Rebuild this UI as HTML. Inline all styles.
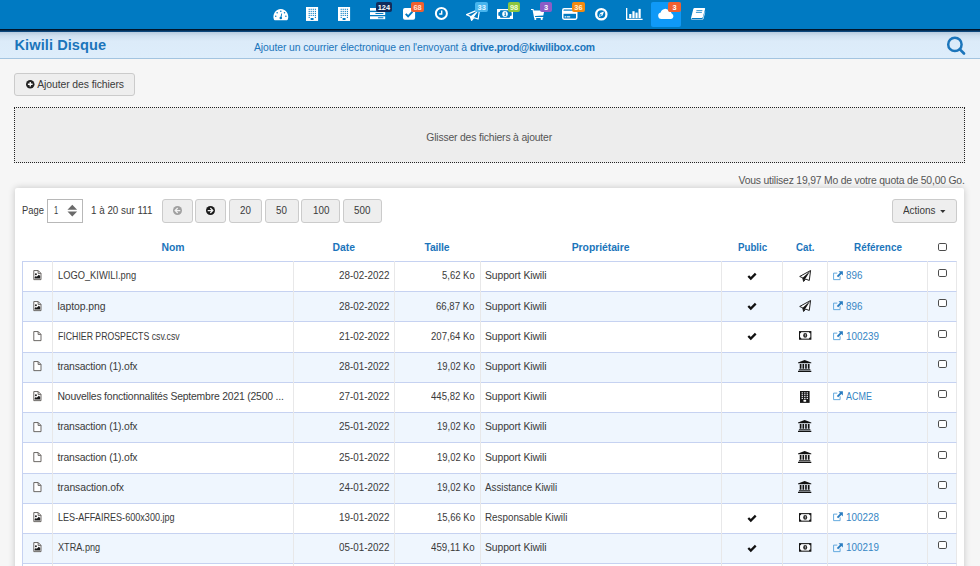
<!DOCTYPE html>
<html lang="fr"><head><meta charset="utf-8"><title>Kiwili Disque</title>
<style>
*{box-sizing:border-box;margin:0;padding:0}
html,body{width:980px;height:566px;overflow:hidden;background:#f6f6f6;font-family:"Liberation Sans",sans-serif;font-size:10.4px;color:#3a3a3a}
.abs{position:absolute}
#top{position:absolute;left:0;top:0;width:980px;height:29px;background:#007ac2}
#topline{position:absolute;left:0;top:28.7px;width:980px;height:3.3px;background:linear-gradient(#001225 0,#001a33 40%,#0b4376 60%,#0d4a80 100%)}
#hdr{position:absolute;left:0;top:32px;width:980px;height:27px;background:linear-gradient(#b7cbde 0,#cfe0f0 15%,#dcebf9 35%,#ddedfb 100%);border-bottom:1px solid #a3c4e0}
.t{position:absolute;white-space:nowrap;line-height:16px;color:#3a3a3a}
.btn{position:absolute;border:1px solid #cbcbcb;border-radius:3px;background:#eee}
#drop{position:absolute;left:14px;top:107px;width:951px;height:55.5px;background:#ededed;border:1px dotted #222}
#panel{position:absolute;left:15px;top:187.5px;width:949px;height:400px;border-radius:2px;background:#fff;box-shadow:0 0 7px rgba(0,0,0,.2)}
.row{position:absolute;left:22px;width:935px;border-top:1px solid #c6d2f1;border-left:1px solid #c6d2f1;border-right:1px solid #e8e8e9;background:#fff}
.row.alt{background:#eff6fe}
.vl{position:absolute;top:261px;width:1px;height:320px;background:#e8e8e9}
.ic{position:absolute;overflow:visible}
.cb{position:absolute;width:8.6px;height:8px;border:1px solid #4c4c4c;border-radius:1.8px;background:#fff}
.bdg{position:absolute;border-radius:2px;color:#fff;font-weight:bold;text-align:center}
</style></head><body>
<div id="top"></div>
<div class="abs" style="left:651px;top:2px;width:30px;height:25px;background:#0f99f7;border-radius:2px"></div>
<svg class="ic" style="left:273.05px;top:8.6px" width="15.65" height="11.3" viewBox="0 0 15.65 11.3"><path d="M7.82 0 A7.82 7.82 0 0 1 14.75 10.6 Q14.5 11.3 13.8 11.3 H1.85 Q1.15 11.3 0.9 10.6 A7.82 7.82 0 0 1 7.82 0 Z" fill="#fff"/><g fill="#007ac2"><circle cx="2.75" cy="7.2" r="0.75"/><circle cx="4.15" cy="3.8" r="0.75"/><circle cx="7.8" cy="2.2" r="0.75"/><circle cx="11.5" cy="3.8" r="0.75"/><circle cx="12.9" cy="7.2" r="0.75"/><circle cx="7.8" cy="9" r="1.3"/><path d="M7.4 8.6 L8.3 4.4 L9.1 4.6 L8.4 8.8 Z"/></g></svg>
<svg class="ic" style="left:306.1px;top:7.05px" width="12.1" height="13.95" viewBox="0 0 12.1 13.95"><rect width="12.1" height="13.95" fill="#fff"/><g fill="#007ac2"><rect x="2.65" y="1.75" width="1.1" height="1.1"/><rect x="4.65" y="1.75" width="1.1" height="1.1"/><rect x="6.75" y="1.75" width="1.1" height="1.1"/><rect x="8.85" y="1.75" width="1.1" height="1.1"/><rect x="2.65" y="3.85" width="1.1" height="1.1"/><rect x="4.65" y="3.85" width="1.1" height="1.1"/><rect x="6.75" y="3.85" width="1.1" height="1.1"/><rect x="8.85" y="3.85" width="1.1" height="1.1"/><rect x="2.65" y="5.85" width="1.1" height="1.1"/><rect x="4.65" y="5.85" width="1.1" height="1.1"/><rect x="6.75" y="5.85" width="1.1" height="1.1"/><rect x="8.85" y="5.85" width="1.1" height="1.1"/><rect x="2.65" y="7.85" width="1.1" height="1.1"/><rect x="4.65" y="7.85" width="1.1" height="1.1"/><rect x="6.75" y="7.85" width="1.1" height="1.1"/><rect x="8.85" y="7.85" width="1.1" height="1.1"/><rect x="2.65" y="9.85" width="1.1" height="1.1"/><rect x="8.85" y="9.85" width="1.1" height="1.1"/><rect x="4.5" y="10.9" width="3.2" height="2" rx="0.7"/></g></svg>
<svg class="ic" style="left:338.4px;top:7.05px" width="12.1" height="13.95" viewBox="0 0 12.1 13.95"><rect width="12.1" height="13.95" fill="#fff"/><g fill="#007ac2"><rect x="2.65" y="1.75" width="1.1" height="1.1"/><rect x="4.65" y="1.75" width="1.1" height="1.1"/><rect x="6.75" y="1.75" width="1.1" height="1.1"/><rect x="8.85" y="1.75" width="1.1" height="1.1"/><rect x="2.65" y="3.85" width="1.1" height="1.1"/><rect x="4.65" y="3.85" width="1.1" height="1.1"/><rect x="6.75" y="3.85" width="1.1" height="1.1"/><rect x="8.85" y="3.85" width="1.1" height="1.1"/><rect x="2.65" y="5.85" width="1.1" height="1.1"/><rect x="4.65" y="5.85" width="1.1" height="1.1"/><rect x="6.75" y="5.85" width="1.1" height="1.1"/><rect x="8.85" y="5.85" width="1.1" height="1.1"/><rect x="2.65" y="7.85" width="1.1" height="1.1"/><rect x="4.65" y="7.85" width="1.1" height="1.1"/><rect x="6.75" y="7.85" width="1.1" height="1.1"/><rect x="8.85" y="7.85" width="1.1" height="1.1"/><rect x="2.65" y="9.85" width="1.1" height="1.1"/><rect x="8.85" y="9.85" width="1.1" height="1.1"/><rect x="4.5" y="10.9" width="3.2" height="2" rx="0.7"/></g></svg>
<svg class="ic" style="left:369.6px;top:8.0px" width="15.2" height="11.2" viewBox="0 0 15.2 11.2"><rect x="0" y="0" width="15.2" height="2.7" fill="#fff"/><rect x="0" y="4.1" width="15.2" height="2.9" fill="#fff"/><rect x="0" y="8.3" width="15.2" height="2.9" fill="#fff"/><rect x="5.3" y="5" width="8.2" height="1.1" rx="0.55" fill="#007ac2"/><rect x="7.9" y="9.2" width="5.6" height="1.1" rx="0.55" fill="#007ac2"/></svg>
<div class="bdg" style="left:376.1px;top:2.1px;width:15.5px;height:9.5px;background:#102c5c;color:#fff;font-size:7.4px;line-height:12.1px">124</div>
<svg class="ic" style="left:403px;top:8.2px" width="12.1" height="11.7" viewBox="0 0 12.1 11.7"><rect width="12.1" height="11.7" rx="1.9" fill="#fff"/><path d="M2.7 5.9 L5.1 8.3 L9.5 3.7" fill="none" stroke="#007ac2" stroke-width="1.9"/></svg>
<div class="bdg" style="left:411.1px;top:2.1px;width:12.9px;height:9.5px;background:#f0602f;color:#ffe3d6;font-size:7.4px;line-height:12.1px">68</div>
<svg class="ic" style="left:435.1px;top:7.3px" width="12.8" height="12.8" viewBox="0 0 12.8 12.8"><circle cx="6.4" cy="6.4" r="5.5" fill="none" stroke="#fff" stroke-width="2"/><path d="M6.7 3.6 V7 H4.2" fill="none" stroke="#fff" stroke-width="1.4"/></svg>
<svg class="ic" style="left:466.1px;top:9.2px" width="14" height="11.8" viewBox="0 0 14 11.8"><path d="M13.6 0.2 L0.6 5.7 L4.3 7.4 L5.6 11.3 L7.8 8.7 L12.1 10 Z" fill="none" stroke="#fff" stroke-width="1.25" stroke-linejoin="round"/><path d="M4.3 7.4 L13.4 0.5 L5.6 11.3 Z" fill="#fff"/></svg>
<div class="bdg" style="left:475.3px;top:2.1px;width:12.8px;height:9.5px;background:#47b5ee;color:#e3f5ff;font-size:7.4px;line-height:12.1px">33</div>
<svg class="ic" style="left:497.1px;top:8.9px" width="16" height="10" viewBox="0 0 16 10"><rect width="16" height="10" fill="#fff"/><path d="M3.4 1.3 H12.6 A2.1 2.1 0 0 0 14.7 3.4 V6.6 A2.1 2.1 0 0 0 12.6 8.7 H3.4 A2.1 2.1 0 0 0 1.3 6.6 V3.4 A2.1 2.1 0 0 0 3.4 1.3 Z" fill="#007ac2"/><ellipse cx="8" cy="5" rx="2.8" ry="3" fill="#fff"/><path d="M7.5 3.9 L8.3 3.4 V6.5 M7.3 6.6 H9.2" stroke="#007ac2" stroke-width="0.9" fill="none"/></svg>
<div class="bdg" style="left:508px;top:2.1px;width:12px;height:9.5px;background:#8dc63f;color:#f0ffd9;font-size:7.4px;line-height:12.1px">98</div>
<svg class="ic" style="left:531px;top:8.9px" width="13.4" height="10.9" viewBox="0 0 13.4 10.9"><path d="M0 0 H2.5 L2.8 1.5 H13.4 L12.3 6.4 L4 7.1 L4.2 7.9 H12.2 V9 H3.1 L1.6 1.1 H0 Z" fill="#fff"/><circle cx="4.3" cy="9.9" r="1.05" fill="#fff"/><circle cx="10.7" cy="9.9" r="1.05" fill="#fff"/></svg>
<div class="bdg" style="left:540px;top:2.1px;width:12px;height:9.5px;background:#8d5cc6;color:#fff;font-size:7.4px;line-height:12.1px">3</div>
<svg class="ic" style="left:561.5px;top:7.9px" width="15.5" height="11.9" viewBox="0 0 15.5 11.9"><rect x="0.75" y="0.75" width="14" height="10.4" rx="1.4" fill="none" stroke="#fff" stroke-width="1.5"/><rect x="0.75" y="2.7" width="14" height="3.1" fill="#fff"/><rect x="2.6" y="8.3" width="1.8" height="1.1" fill="#fff"/><rect x="5" y="8.3" width="3.2" height="1.1" fill="#fff"/></svg>
<div class="bdg" style="left:571.9px;top:2.1px;width:13.1px;height:9.5px;background:#f28a10;color:#fff0d9;font-size:7.4px;line-height:12.1px">36</div>
<svg class="ic" style="left:595.4px;top:7.5px" width="12.6" height="12.6" viewBox="0 0 12.6 12.6"><circle cx="6.3" cy="6.3" r="5.15" fill="#007ac2" stroke="#fff" stroke-width="2.3"/><path d="M9 3.6 L7.5 7.5 L3.6 9 L5.1 5.1 Z" fill="#fff"/><path d="M5.7 5.7 L6.9 6.9 L4.4 8.2 Z" fill="#007ac2"/></svg>
<svg class="ic" style="left:625.6px;top:7.8px" width="16.6" height="11.9" viewBox="0 0 16.6 11.9"><path d="M0.65 0 V11.3 H16.6" fill="none" stroke="#fff" stroke-width="1.3"/><rect x="3.2" y="6" width="2.2" height="4.1" fill="#fff"/><rect x="6.4" y="3.2" width="2.2" height="6.9" fill="#fff"/><rect x="9.5" y="4.6" width="2.1" height="5.5" fill="#fff"/><rect x="12.5" y="0.9" width="2.2" height="9.2" fill="#fff"/></svg>
<svg class="ic" style="left:657.8px;top:8.0px" width="16" height="11.1" viewBox="0 0 16 11.1"><path d="M3.3 11.1 A3.3 3.3 0 0 1 2.7 4.6 A4.5 4.5 0 0 1 11.2 3.4 A2.7 2.7 0 0 1 13.7 5.6 A2.9 2.9 0 0 1 13.1 11.1 Z" fill="#fff"/></svg>
<div class="bdg" style="left:667.9px;top:2px;width:13.1px;height:9.6px;background:#f0602f;color:#fff;font-size:7.4px;line-height:12.2px">3</div>
<svg class="ic" style="left:691.1px;top:8.1px" width="14.2" height="11.6" viewBox="0 0 14.2 11.6"><path d="M3.6 0 H13.4 Q14.4 0 14.1 1 L11.9 9 Q11.6 10 10.6 10 H1.2 Q0.6 10 0.5 10.5 Q0.5 11 1.2 11 H10.8 Q11.6 11 12 10.2 L14 3.2 Q14.4 3.6 14.2 4.2 L12.6 10.4 Q12.2 11.6 11 11.6 H1 Q-0.3 11.6 0 10 L2.3 1 Q2.6 0 3.6 0 Z" fill="#fff"/><path d="M5.4 2.6 H11.4 M4.9 4.4 H10.9" stroke="#007ac2" stroke-width="0.8"/></svg>
<div id="topline"></div>
<div id="hdr"></div>
<div class="t" style="left:14.5px;top:37px;letter-spacing:0.067px;font-size:14.6px;font-weight:bold;color:#1b75bb">Kiwili Disque</div>
<div class="t" style="left:254px;top:40px;letter-spacing:-0.095px;color:#1b75bb">Ajouter un courrier électronique en l'envoyant à</div>
<div class="t" style="left:470px;top:40px;letter-spacing:-0.174px;font-weight:bold;color:#1b75bb">drive.prod@kiwilibox.com</div>
<svg class="ic" style="left:946px;top:36px" width="20" height="20" viewBox="0 0 20 20"><circle cx="8.9" cy="8.4" r="6.7" fill="none" stroke="#1b75bb" stroke-width="2.5"/><path d="M13.9 13.4 L18 17.5" stroke="#1b75bb" stroke-width="2.7" stroke-linecap="round"/></svg>
<div class="btn" style="left:14.25px;top:73.25px;width:120.75px;height:22.5px"></div>
<svg class="ic" style="left:25.75px;top:80.25px" width="8.5" height="8.5" viewBox="0 0 9 9"><circle cx="4.5" cy="4.5" r="4.5" fill="#222"/><path d="M4.5 2 V7 M2 4.5 H7" stroke="#fff" stroke-width="1.4"/></svg>
<div class="t" style="left:37.25px;top:77px;letter-spacing:-0.086px">Ajouter des fichiers</div>
<div id="drop"></div>
<div class="t" style="left:426.25px;top:130px;letter-spacing:-0.181px;color:#555">Glisser des fichiers à ajouter</div>
<div class="t" style="left:738.5px;top:173px;letter-spacing:-0.203px;color:#555">Vous utilisez 19,97 Mo de votre quota de 50,00 Go.</div>
<div id="panel"></div>
<div class="t" style="left:22.25px;top:203px;transform-origin:0 50%;transform:scaleX(0.9019)">Page</div>
<div class="abs" style="left:47.25px;top:199.25px;width:35.5px;height:23.25px;border:1px solid #b8b8b8;background:#fff"></div>
<div class="t" style="left:53.75px;top:203px;transform-origin:0 50%;transform:scaleX(0.7178)">1</div>
<svg class="ic" style="left:67.1px;top:203.75px" width="10.6" height="13.25" viewBox="0 0 11 13"><path d="M0.5 5.6 L5.5 0.3 L10.5 5.6 Z M0.5 7.4 L5.5 12.7 L10.5 7.4 Z" fill="#6a6a6a"/></svg>
<div class="t" style="left:91px;top:203px;transform-origin:0 50%;transform:scaleX(0.9462)">1 à 20 sur 111</div>
<div class="btn" style="left:162px;top:199.25px;width:30.6px;height:23.5px"></div>
<div class="btn" style="left:195px;top:199.25px;width:30.6px;height:23.5px"></div>
<div class="btn" style="left:229px;top:199.25px;width:32.6px;height:23.5px"></div>
<div class="btn" style="left:265px;top:199.25px;width:33.6px;height:23.5px"></div>
<div class="btn" style="left:301px;top:199.25px;width:38.6px;height:23.5px"></div>
<div class="btn" style="left:343px;top:199.25px;width:38.6px;height:23.5px"></div>
<div class="btn" style="left:892px;top:199.25px;width:65px;height:23.5px"></div>
<svg class="ic" style="left:172.95px;top:205.9px" width="9" height="9" viewBox="0 0 9 9"><circle cx="4.5" cy="4.5" r="4.5" fill="#a0a0a0"/><path d="M4.7 2 L2.2 4.5 L4.7 7 M2.4 4.5 H7.3" stroke="#f2f2f2" stroke-width="1.25" fill="none"/></svg>
<svg class="ic" style="left:206.25px;top:205.9px" width="9" height="9" viewBox="0 0 9 9"><circle cx="4.5" cy="4.5" r="4.5" fill="#1a1a1a"/><path d="M4.3 2 L6.8 4.5 L4.3 7 M6.6 4.5 H1.7" stroke="#f2f2f2" stroke-width="1.25" fill="none"/></svg>
<div class="t" style="left:240px;top:203px;transform-origin:0 50%;transform:scaleX(0.9427)">20</div>
<div class="t" style="left:276.25px;top:203px;transform-origin:0 50%;transform:scaleX(0.9427)">50</div>
<div class="t" style="left:312.5px;top:203px;transform-origin:0 50%;transform:scaleX(0.9456)">100</div>
<div class="t" style="left:354.25px;top:203px;transform-origin:0 50%;transform:scaleX(0.9456)">500</div>
<div class="t" style="left:903.4px;top:203px;transform-origin:0 50%;transform:scaleX(0.9537)">Actions</div>
<svg class="ic" style="left:939.6px;top:210px" width="5.6" height="3" viewBox="0 0 7 4"><path d="M0 0 H7 L3.5 4 Z" fill="#333"/></svg>
<div class="t" style="left:161.5px;top:240px;letter-spacing:-0.065px;font-weight:bold;color:#1b75bb">Nom</div>
<div class="t" style="left:332.5px;top:240px;letter-spacing:0.030px;font-weight:bold;color:#1b75bb">Date</div>
<div class="t" style="left:424.5px;top:240px;letter-spacing:-0.149px;font-weight:bold;color:#1b75bb">Taille</div>
<div class="t" style="left:571.75px;top:240px;letter-spacing:-0.057px;font-weight:bold;color:#1b75bb">Propriétaire</div>
<div class="t" style="left:737.5px;top:240px;transform-origin:0 50%;transform:scaleX(0.9347);font-weight:bold;color:#1b75bb">Public</div>
<div class="t" style="left:795.5px;top:240px;transform-origin:0 50%;transform:scaleX(0.9368);font-weight:bold;color:#1b75bb">Cat.</div>
<div class="t" style="left:853.75px;top:240px;transform-origin:0 50%;transform:scaleX(0.9532);font-weight:bold;color:#1b75bb">Référence</div>
<span class="cb" style="left:938.1px;top:242.9px"></span>
<div class="row" style="top:261px;height:31.22px"></div>
<div class="row alt" style="top:291.22px;height:31.22px"></div>
<div class="row" style="top:321.44px;height:31.22px"></div>
<div class="row alt" style="top:351.67px;height:31.22px"></div>
<div class="row" style="top:381.89px;height:31.22px"></div>
<div class="row alt" style="top:412.11px;height:31.22px"></div>
<div class="row" style="top:442.33px;height:31.22px"></div>
<div class="row alt" style="top:472.55px;height:31.22px"></div>
<div class="row" style="top:502.78px;height:31.22px"></div>
<div class="row alt" style="top:533px;height:31.22px"></div>
<div class="row" style="top:563.22px;height:31.22px"></div>
<div class="vl" style="left:52px"></div>
<div class="vl" style="left:293px"></div>
<div class="vl" style="left:394px"></div>
<div class="vl" style="left:480px"></div>
<div class="vl" style="left:721px"></div>
<div class="vl" style="left:782px"></div>
<div class="vl" style="left:827px"></div>
<div class="vl" style="left:927px"></div>
<svg class="ic" style="left:33.1px;top:270.4px" width="8.8" height="10.2" viewBox="0 0 9 11"><path d="M0.6 0.6 H5.4 L8.4 3.6 V10.4 H0.6 Z M5.3 0.8 V3.7 H8.2" fill="#fff" stroke="#514c48" stroke-width="0.9" stroke-linejoin="round"/><circle cx="2.9" cy="4.6" r="1.05" fill="#1a1a1a"/><path d="M1.5 9.2 V7.7 L2.8 6.4 L3.8 7.4 L6 5.1 L7.5 6.6 V9.2 Z" fill="#1a1a1a"/></svg>
<div class="t" style="left:57.5px;top:268px;transform-origin:0 50%;transform:scaleX(0.8960)">LOGO_KIWILI.png</div>
<div class="t" style="left:338.5px;top:268px;transform-origin:0 50%;transform:scaleX(0.9481)">28-02-2022</div>
<div class="t" style="left:441.75px;top:268px;transform-origin:0 50%;transform:scaleX(0.9113)">5,62 Ko</div>
<div class="t" style="left:485px;top:268px;letter-spacing:-0.111px">Support Kiwili</div>
<svg class="ic" style="left:747.4px;top:271.9px" width="10" height="8" viewBox="0 0 10 8"><path d="M1.3 4 L3.8 6.5 L8.7 1.6" fill="none" stroke="#111" stroke-width="2.3"/></svg>
<svg class="ic" style="left:799px;top:269.8px" width="12.2" height="12.4" viewBox="0 0 12.2 12.4"><path d="M11.6 0.5 L0.7 6.5 L3.7 7.8 L4.6 11.5 L6.7 9.1 L10.3 10.5 Z" fill="#fff" stroke="#151515" stroke-width="0.95" stroke-linejoin="round"/><path d="M3.7 7.8 L11.4 0.8 L4.6 11.5 Z" fill="#151515"/></svg>
<svg class="ic" style="left:832.9px;top:270.55px" width="10.2" height="9.2" viewBox="0 0 11 10"><path d="M7.7 5.8 V9.4 H0.6 V2.3 H4.6" fill="none" stroke="#58a3dc" stroke-width="1"/><path d="M6 0.3 H10.7 V5 L9.1 3.4 L5.6 6.9 L4.1 5.4 L7.6 1.9 Z" fill="#2a7cc0"/></svg>
<div class="t" style="left:846px;top:268px;transform-origin:0 50%;transform:scaleX(0.9456);color:#3585c4">896</div>
<span class="cb" style="left:938.1px;top:269.2px"></span>
<svg class="ic" style="left:33.1px;top:300.62px" width="8.8" height="10.2" viewBox="0 0 9 11"><path d="M0.6 0.6 H5.4 L8.4 3.6 V10.4 H0.6 Z M5.3 0.8 V3.7 H8.2" fill="#fff" stroke="#514c48" stroke-width="0.9" stroke-linejoin="round"/><circle cx="2.9" cy="4.6" r="1.05" fill="#1a1a1a"/><path d="M1.5 9.2 V7.7 L2.8 6.4 L3.8 7.4 L6 5.1 L7.5 6.6 V9.2 Z" fill="#1a1a1a"/></svg>
<div class="t" style="left:57.5px;top:299px;letter-spacing:-0.065px">laptop.png</div>
<div class="t" style="left:338.5px;top:299px;transform-origin:0 50%;transform:scaleX(0.9481)">28-02-2022</div>
<div class="t" style="left:436px;top:299px;transform-origin:0 50%;transform:scaleX(0.9229)">66,87 Ko</div>
<div class="t" style="left:485px;top:299px;letter-spacing:-0.111px">Support Kiwili</div>
<svg class="ic" style="left:747.4px;top:302.12px" width="10" height="8" viewBox="0 0 10 8"><path d="M1.3 4 L3.8 6.5 L8.7 1.6" fill="none" stroke="#111" stroke-width="2.3"/></svg>
<svg class="ic" style="left:799px;top:300.02px" width="12.2" height="12.4" viewBox="0 0 12.2 12.4"><path d="M11.6 0.5 L0.7 6.5 L3.7 7.8 L4.6 11.5 L6.7 9.1 L10.3 10.5 Z" fill="#fff" stroke="#151515" stroke-width="0.95" stroke-linejoin="round"/><path d="M3.7 7.8 L11.4 0.8 L4.6 11.5 Z" fill="#151515"/></svg>
<svg class="ic" style="left:832.9px;top:300.77px" width="10.2" height="9.2" viewBox="0 0 11 10"><path d="M7.7 5.8 V9.4 H0.6 V2.3 H4.6" fill="none" stroke="#58a3dc" stroke-width="1"/><path d="M6 0.3 H10.7 V5 L9.1 3.4 L5.6 6.9 L4.1 5.4 L7.6 1.9 Z" fill="#2a7cc0"/></svg>
<div class="t" style="left:846px;top:299px;transform-origin:0 50%;transform:scaleX(0.9456);color:#3585c4">896</div>
<span class="cb" style="left:938.1px;top:299.42px"></span>
<svg class="ic" style="left:33.1px;top:330.84px" width="8.8" height="10.2" viewBox="0 0 9 11"><path d="M0.6 0.6 H5.4 L8.4 3.6 V10.4 H0.6 Z M5.3 0.8 V3.7 H8.2" fill="#fff" stroke="#514c48" stroke-width="0.9" stroke-linejoin="round"/></svg>
<div class="t" style="left:57.5px;top:329px;transform-origin:0 50%;transform:scaleX(0.8406)">FICHIER PROSPECTS csv.csv</div>
<div class="t" style="left:338.5px;top:329px;transform-origin:0 50%;transform:scaleX(0.9481)">21-02-2022</div>
<div class="t" style="left:430.75px;top:329px;transform-origin:0 50%;transform:scaleX(0.9211)">207,64 Ko</div>
<div class="t" style="left:485px;top:329px;letter-spacing:-0.111px">Support Kiwili</div>
<svg class="ic" style="left:747.4px;top:332.34px" width="10" height="8" viewBox="0 0 10 8"><path d="M1.3 4 L3.8 6.5 L8.7 1.6" fill="none" stroke="#111" stroke-width="2.3"/></svg>
<svg class="ic" style="left:798.9px;top:331.34px" width="12.4" height="8.8" viewBox="0 0 13 9"><rect x="0.55" y="0.55" width="11.9" height="7.9" fill="#fff" stroke="#161616" stroke-width="1.1"/><path d="M0.5 0.5 H2.6 A2.1 2.1 0 0 1 0.5 2.6 Z M12.5 0.5 V2.6 A2.1 2.1 0 0 1 10.4 0.5 Z M0.5 8.5 V6.4 A2.1 2.1 0 0 1 2.6 8.5 Z M12.5 8.5 H10.4 A2.1 2.1 0 0 1 12.5 6.4 Z" fill="#161616"/><ellipse cx="6.5" cy="4.5" rx="2.1" ry="2.5" fill="#2a2a2a"/><path d="M6.2 3.6 L6.7 3.3 V5.6" stroke="#fff" stroke-width="0.6" fill="none"/></svg>
<svg class="ic" style="left:832.9px;top:330.99px" width="10.2" height="9.2" viewBox="0 0 11 10"><path d="M7.7 5.8 V9.4 H0.6 V2.3 H4.6" fill="none" stroke="#58a3dc" stroke-width="1"/><path d="M6 0.3 H10.7 V5 L9.1 3.4 L5.6 6.9 L4.1 5.4 L7.6 1.9 Z" fill="#2a7cc0"/></svg>
<div class="t" style="left:846px;top:329px;transform-origin:0 50%;transform:scaleX(0.9485);color:#3585c4">100239</div>
<span class="cb" style="left:938.1px;top:329.64px"></span>
<svg class="ic" style="left:33.1px;top:361.07px" width="8.8" height="10.2" viewBox="0 0 9 11"><path d="M0.6 0.6 H5.4 L8.4 3.6 V10.4 H0.6 Z M5.3 0.8 V3.7 H8.2" fill="#fff" stroke="#514c48" stroke-width="0.9" stroke-linejoin="round"/></svg>
<div class="t" style="left:57.5px;top:359px;letter-spacing:-0.172px">transaction (1).ofx</div>
<div class="t" style="left:338.5px;top:359px;transform-origin:0 50%;transform:scaleX(0.9481)">28-01-2022</div>
<div class="t" style="left:436.5px;top:359px;transform-origin:0 50%;transform:scaleX(0.9109)">19,02 Ko</div>
<div class="t" style="left:485px;top:359px;letter-spacing:-0.111px">Support Kiwili</div>
<svg class="ic" style="left:798.45px;top:359.97px" width="13.3" height="12" preserveAspectRatio="none" viewBox="0 0 13 13"><path d="M6.5 0 L13 2.6 V3.5 H0 V2.6 Z M1.7 4.2 H3.4 V9.6 H1.7 Z M4.4 4.2 H6 V9.6 H4.4 Z M7 4.2 H8.6 V9.6 H7 Z M9.6 4.2 H11.3 V9.6 H9.6 Z M0.9 10.1 H12.1 V11.2 H0.9 Z M0 11.7 H13 V13 H0 Z" fill="#111"/></svg>
<span class="cb" style="left:938.1px;top:359.87px"></span>
<svg class="ic" style="left:33.1px;top:391.29px" width="8.8" height="10.2" viewBox="0 0 9 11"><path d="M0.6 0.6 H5.4 L8.4 3.6 V10.4 H0.6 Z M5.3 0.8 V3.7 H8.2" fill="#fff" stroke="#514c48" stroke-width="0.9" stroke-linejoin="round"/><circle cx="2.9" cy="4.6" r="1.05" fill="#1a1a1a"/><path d="M1.5 9.2 V7.7 L2.8 6.4 L3.8 7.4 L6 5.1 L7.5 6.6 V9.2 Z" fill="#1a1a1a"/></svg>
<div class="t" style="left:57.5px;top:389px;letter-spacing:-0.190px">Nouvelles fonctionnalités Septembre 2021 (2500 ...</div>
<div class="t" style="left:338.5px;top:389px;transform-origin:0 50%;transform:scaleX(0.9481)">27-01-2022</div>
<div class="t" style="left:430.75px;top:389px;transform-origin:0 50%;transform:scaleX(0.9211)">445,82 Ko</div>
<div class="t" style="left:485px;top:389px;letter-spacing:-0.111px">Support Kiwili</div>
<svg class="ic" style="left:800.3px;top:391.04px" width="9.6" height="11.9" preserveAspectRatio="none" viewBox="0 0 9 12"><rect width="9" height="12" fill="#161616"/><g fill="#e8e8ee"><rect x="1.5" y="1.3" width="1.3" height="1.1"/><rect x="3.85" y="1.3" width="1.3" height="1.1"/><rect x="6.2" y="1.3" width="1.3" height="1.1"/><rect x="1.5" y="3.2" width="1.3" height="1.1"/><rect x="3.85" y="3.2" width="1.3" height="1.1"/><rect x="6.2" y="3.2" width="1.3" height="1.1"/><rect x="1.5" y="5.1" width="1.3" height="1.1"/><rect x="3.85" y="5.1" width="1.3" height="1.1"/><rect x="6.2" y="5.1" width="1.3" height="1.1"/><rect x="1.5" y="6.999999999999999" width="1.3" height="1.1"/><rect x="3.85" y="6.999999999999999" width="1.3" height="1.1"/><rect x="6.2" y="6.999999999999999" width="1.3" height="1.1"/></g><rect x="3.2" y="8.9" width="2.6" height="1.9" rx="0.5" fill="#fff"/></svg>
<svg class="ic" style="left:832.9px;top:391.44px" width="10.2" height="9.2" viewBox="0 0 11 10"><path d="M7.7 5.8 V9.4 H0.6 V2.3 H4.6" fill="none" stroke="#58a3dc" stroke-width="1"/><path d="M6 0.3 H10.7 V5 L9.1 3.4 L5.6 6.9 L4.1 5.4 L7.6 1.9 Z" fill="#2a7cc0"/></svg>
<div class="t" style="left:846px;top:389px;transform-origin:0 50%;transform:scaleX(0.8624);color:#3585c4">ACME</div>
<span class="cb" style="left:938.1px;top:390.09px"></span>
<svg class="ic" style="left:33.1px;top:421.51px" width="8.8" height="10.2" viewBox="0 0 9 11"><path d="M0.6 0.6 H5.4 L8.4 3.6 V10.4 H0.6 Z M5.3 0.8 V3.7 H8.2" fill="#fff" stroke="#514c48" stroke-width="0.9" stroke-linejoin="round"/></svg>
<div class="t" style="left:57.5px;top:419px;letter-spacing:-0.172px">transaction (1).ofx</div>
<div class="t" style="left:338.5px;top:419px;transform-origin:0 50%;transform:scaleX(0.9481)">25-01-2022</div>
<div class="t" style="left:436.5px;top:419px;transform-origin:0 50%;transform:scaleX(0.9109)">19,02 Ko</div>
<div class="t" style="left:485px;top:419px;letter-spacing:-0.111px">Support Kiwili</div>
<svg class="ic" style="left:798.45px;top:420.41px" width="13.3" height="12" preserveAspectRatio="none" viewBox="0 0 13 13"><path d="M6.5 0 L13 2.6 V3.5 H0 V2.6 Z M1.7 4.2 H3.4 V9.6 H1.7 Z M4.4 4.2 H6 V9.6 H4.4 Z M7 4.2 H8.6 V9.6 H7 Z M9.6 4.2 H11.3 V9.6 H9.6 Z M0.9 10.1 H12.1 V11.2 H0.9 Z M0 11.7 H13 V13 H0 Z" fill="#111"/></svg>
<span class="cb" style="left:938.1px;top:420.31px"></span>
<svg class="ic" style="left:33.1px;top:451.73px" width="8.8" height="10.2" viewBox="0 0 9 11"><path d="M0.6 0.6 H5.4 L8.4 3.6 V10.4 H0.6 Z M5.3 0.8 V3.7 H8.2" fill="#fff" stroke="#514c48" stroke-width="0.9" stroke-linejoin="round"/></svg>
<div class="t" style="left:57.5px;top:450px;letter-spacing:-0.172px">transaction (1).ofx</div>
<div class="t" style="left:338.5px;top:450px;transform-origin:0 50%;transform:scaleX(0.9481)">25-01-2022</div>
<div class="t" style="left:436.5px;top:450px;transform-origin:0 50%;transform:scaleX(0.9109)">19,02 Ko</div>
<div class="t" style="left:485px;top:450px;letter-spacing:-0.111px">Support Kiwili</div>
<svg class="ic" style="left:798.45px;top:450.63px" width="13.3" height="12" preserveAspectRatio="none" viewBox="0 0 13 13"><path d="M6.5 0 L13 2.6 V3.5 H0 V2.6 Z M1.7 4.2 H3.4 V9.6 H1.7 Z M4.4 4.2 H6 V9.6 H4.4 Z M7 4.2 H8.6 V9.6 H7 Z M9.6 4.2 H11.3 V9.6 H9.6 Z M0.9 10.1 H12.1 V11.2 H0.9 Z M0 11.7 H13 V13 H0 Z" fill="#111"/></svg>
<span class="cb" style="left:938.1px;top:450.53px"></span>
<svg class="ic" style="left:33.1px;top:481.95px" width="8.8" height="10.2" viewBox="0 0 9 11"><path d="M0.6 0.6 H5.4 L8.4 3.6 V10.4 H0.6 Z M5.3 0.8 V3.7 H8.2" fill="#fff" stroke="#514c48" stroke-width="0.9" stroke-linejoin="round"/></svg>
<div class="t" style="left:57.5px;top:480px;letter-spacing:-0.079px">transaction.ofx</div>
<div class="t" style="left:338.5px;top:480px;transform-origin:0 50%;transform:scaleX(0.9481)">24-01-2022</div>
<div class="t" style="left:436.5px;top:480px;transform-origin:0 50%;transform:scaleX(0.9109)">19,02 Ko</div>
<div class="t" style="left:485px;top:480px;transform-origin:0 50%;transform:scaleX(0.9393)">Assistance Kiwili</div>
<svg class="ic" style="left:798.45px;top:480.85px" width="13.3" height="12" preserveAspectRatio="none" viewBox="0 0 13 13"><path d="M6.5 0 L13 2.6 V3.5 H0 V2.6 Z M1.7 4.2 H3.4 V9.6 H1.7 Z M4.4 4.2 H6 V9.6 H4.4 Z M7 4.2 H8.6 V9.6 H7 Z M9.6 4.2 H11.3 V9.6 H9.6 Z M0.9 10.1 H12.1 V11.2 H0.9 Z M0 11.7 H13 V13 H0 Z" fill="#111"/></svg>
<span class="cb" style="left:938.1px;top:480.75px"></span>
<svg class="ic" style="left:33.1px;top:512.18px" width="8.8" height="10.2" viewBox="0 0 9 11"><path d="M0.6 0.6 H5.4 L8.4 3.6 V10.4 H0.6 Z M5.3 0.8 V3.7 H8.2" fill="#fff" stroke="#514c48" stroke-width="0.9" stroke-linejoin="round"/><circle cx="2.9" cy="4.6" r="1.05" fill="#1a1a1a"/><path d="M1.5 9.2 V7.7 L2.8 6.4 L3.8 7.4 L6 5.1 L7.5 6.6 V9.2 Z" fill="#1a1a1a"/></svg>
<div class="t" style="left:57.5px;top:510px;transform-origin:0 50%;transform:scaleX(0.8743)">LES-AFFAIRES-600x300.jpg</div>
<div class="t" style="left:338.5px;top:510px;transform-origin:0 50%;transform:scaleX(0.9481)">19-01-2022</div>
<div class="t" style="left:436.5px;top:510px;transform-origin:0 50%;transform:scaleX(0.9109)">15,66 Ko</div>
<div class="t" style="left:485px;top:510px;transform-origin:0 50%;transform:scaleX(0.9448)">Responsable Kiwili</div>
<svg class="ic" style="left:747.4px;top:513.68px" width="10" height="8" viewBox="0 0 10 8"><path d="M1.3 4 L3.8 6.5 L8.7 1.6" fill="none" stroke="#111" stroke-width="2.3"/></svg>
<svg class="ic" style="left:798.9px;top:512.68px" width="12.4" height="8.8" viewBox="0 0 13 9"><rect x="0.55" y="0.55" width="11.9" height="7.9" fill="#fff" stroke="#161616" stroke-width="1.1"/><path d="M0.5 0.5 H2.6 A2.1 2.1 0 0 1 0.5 2.6 Z M12.5 0.5 V2.6 A2.1 2.1 0 0 1 10.4 0.5 Z M0.5 8.5 V6.4 A2.1 2.1 0 0 1 2.6 8.5 Z M12.5 8.5 H10.4 A2.1 2.1 0 0 1 12.5 6.4 Z" fill="#161616"/><ellipse cx="6.5" cy="4.5" rx="2.1" ry="2.5" fill="#2a2a2a"/><path d="M6.2 3.6 L6.7 3.3 V5.6" stroke="#fff" stroke-width="0.6" fill="none"/></svg>
<svg class="ic" style="left:832.9px;top:512.33px" width="10.2" height="9.2" viewBox="0 0 11 10"><path d="M7.7 5.8 V9.4 H0.6 V2.3 H4.6" fill="none" stroke="#58a3dc" stroke-width="1"/><path d="M6 0.3 H10.7 V5 L9.1 3.4 L5.6 6.9 L4.1 5.4 L7.6 1.9 Z" fill="#2a7cc0"/></svg>
<div class="t" style="left:846px;top:510px;transform-origin:0 50%;transform:scaleX(0.9485);color:#3585c4">100228</div>
<span class="cb" style="left:938.1px;top:510.98px"></span>
<svg class="ic" style="left:33.1px;top:542.4px" width="8.8" height="10.2" viewBox="0 0 9 11"><path d="M0.6 0.6 H5.4 L8.4 3.6 V10.4 H0.6 Z M5.3 0.8 V3.7 H8.2" fill="#fff" stroke="#514c48" stroke-width="0.9" stroke-linejoin="round"/><circle cx="2.9" cy="4.6" r="1.05" fill="#1a1a1a"/><path d="M1.5 9.2 V7.7 L2.8 6.4 L3.8 7.4 L6 5.1 L7.5 6.6 V9.2 Z" fill="#1a1a1a"/></svg>
<div class="t" style="left:57.5px;top:540px;transform-origin:0 50%;transform:scaleX(0.8793)">XTRA.png</div>
<div class="t" style="left:338.5px;top:540px;transform-origin:0 50%;transform:scaleX(0.9481)">05-01-2022</div>
<div class="t" style="left:430.75px;top:540px;transform-origin:0 50%;transform:scaleX(0.9365)">459,11 Ko</div>
<div class="t" style="left:485px;top:540px;letter-spacing:-0.111px">Support Kiwili</div>
<svg class="ic" style="left:747.4px;top:543.9px" width="10" height="8" viewBox="0 0 10 8"><path d="M1.3 4 L3.8 6.5 L8.7 1.6" fill="none" stroke="#111" stroke-width="2.3"/></svg>
<svg class="ic" style="left:798.9px;top:542.9px" width="12.4" height="8.8" viewBox="0 0 13 9"><rect x="0.55" y="0.55" width="11.9" height="7.9" fill="#fff" stroke="#161616" stroke-width="1.1"/><path d="M0.5 0.5 H2.6 A2.1 2.1 0 0 1 0.5 2.6 Z M12.5 0.5 V2.6 A2.1 2.1 0 0 1 10.4 0.5 Z M0.5 8.5 V6.4 A2.1 2.1 0 0 1 2.6 8.5 Z M12.5 8.5 H10.4 A2.1 2.1 0 0 1 12.5 6.4 Z" fill="#161616"/><ellipse cx="6.5" cy="4.5" rx="2.1" ry="2.5" fill="#2a2a2a"/><path d="M6.2 3.6 L6.7 3.3 V5.6" stroke="#fff" stroke-width="0.6" fill="none"/></svg>
<svg class="ic" style="left:832.9px;top:542.55px" width="10.2" height="9.2" viewBox="0 0 11 10"><path d="M7.7 5.8 V9.4 H0.6 V2.3 H4.6" fill="none" stroke="#58a3dc" stroke-width="1"/><path d="M6 0.3 H10.7 V5 L9.1 3.4 L5.6 6.9 L4.1 5.4 L7.6 1.9 Z" fill="#2a7cc0"/></svg>
<div class="t" style="left:846px;top:540px;transform-origin:0 50%;transform:scaleX(0.9485);color:#3585c4">100219</div>
<span class="cb" style="left:938.1px;top:541.2px"></span>
</body></html>
